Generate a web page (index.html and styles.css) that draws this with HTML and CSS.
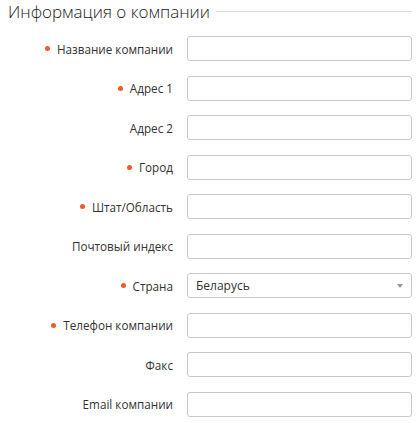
FILE: index.html
```html
<!DOCTYPE html>
<html lang="ru">
<head>
  <meta charset="UTF-8" />
  <meta name="viewport" content="width=device-width, initial-scale=1.0" />
  <title>Информация о компании</title>
  <link rel="stylesheet" href="styles.css">
</head>
<body>
  <div class="company-form">
    <div class="legend">
      <span class="legend-text">Информация о компании</span>
      <span class="legend-line"></span>
    </div>

    <div class="form-rows">
      <label class="field-label required">Название компании</label>
      <input class="field-input" type="text">

      <label class="field-label required">Адрес 1</label>
      <input class="field-input" type="text">

      <label class="field-label">Адрес 2</label>
      <input class="field-input" type="text">

      <label class="field-label required">Город</label>
      <input class="field-input" type="text">

      <label class="field-label required">Штат/Область</label>
      <input class="field-input" type="text">

      <label class="field-label">Почтовый индекс</label>
      <input class="field-input" type="text">

      <label class="field-label required">Страна</label>
      <div class="field-input field-select">
        <span>Беларусь</span>
        <span class="select-arrow"></span>
      </div>

      <label class="field-label required">Телефон компании</label>
      <input class="field-input" type="text">

      <label class="field-label">Факс</label>
      <input class="field-input" type="text">

      <label class="field-label">Email компании</label>
      <input class="field-input" type="text">
    </div>
  </div>
</body>
</html>
```

FILE: styles.css
```css
body {
  margin: 0;
  font-family: "Open Sans", Arial, sans-serif;
  color: #333;
  background: #fff;
}

.company-form {
  width: 412px;
}

.legend {
  display: flex;
  align-items: center;
  padding-left: 8px;
  height: 23px;
}

.legend-text {
  font-size: 17px;
  font-weight: 300;
  line-height: 23px;
  color: #222;
  white-space: nowrap;
}

.legend-line {
  flex: 1;
  height: 1px;
  background-color: #dcdcdc;
  margin-left: 6px;
}

.form-rows {
  display: grid;
  grid-template-columns: 173px 225px;
  column-gap: 14px;
  row-gap: 14.5px;
  margin-top: 13px;
}

.field-label {
  display: flex;
  align-items: center;
  justify-content: flex-end;
  font-size: 11.7px;
  color: #333;
  height: 25px;
}

.field-label.required::before {
  content: "";
  width: 5px;
  height: 5px;
  border-radius: 50%;
  background-color: #f0592b;
  margin-right: 7px;
}

.field-input {
  box-sizing: border-box;
  height: 25px;
  width: 225px;
  margin: 0;
  border: 1px solid #c8c8c8;
  border-radius: 3px;
  background: #fff;
  font-family: inherit;
  font-size: 12px;
}

.field-select {
  display: flex;
  align-items: center;
  justify-content: space-between;
  padding: 0 8px 0 8px;
  color: #333;
}

.select-arrow {
  width: 0;
  height: 0;
  border-left: 3px solid transparent;
  border-right: 3px solid transparent;
  border-top: 4px solid #999;
}
```
